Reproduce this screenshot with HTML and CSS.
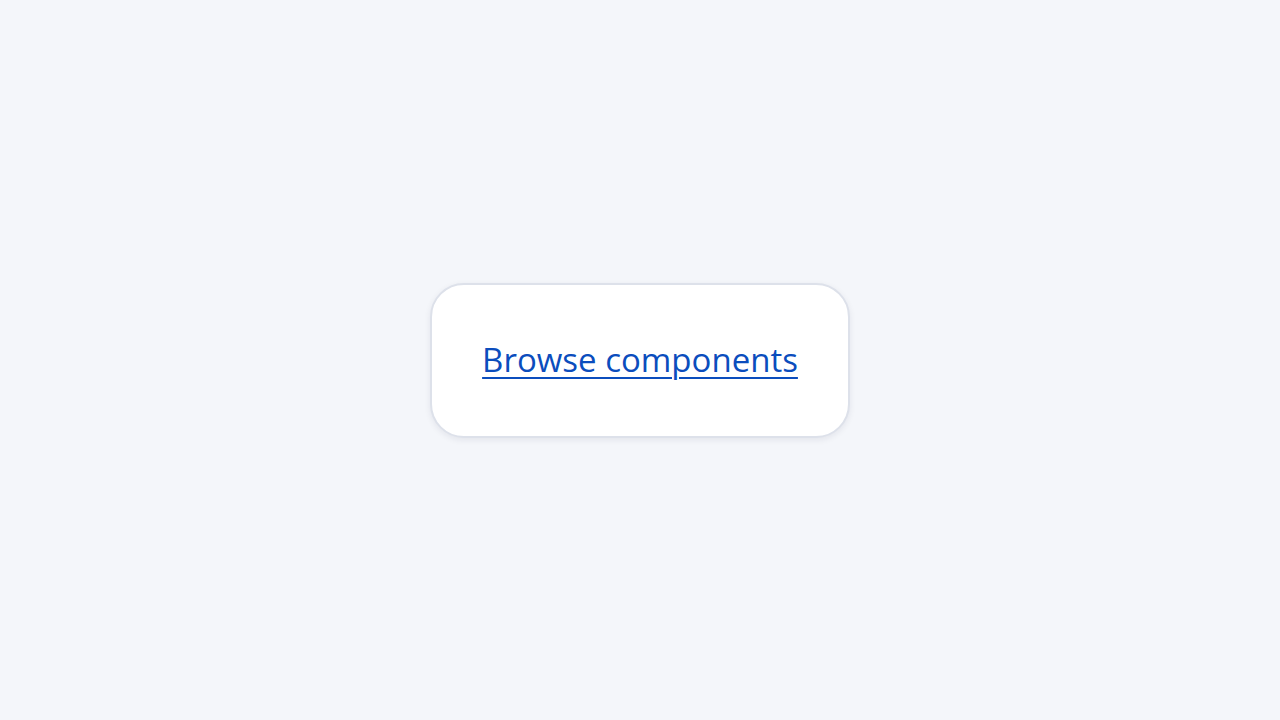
FILE: index.html
```html
<!DOCTYPE html>
<html>
<head>
<meta charset="utf-8">
<link rel="stylesheet" href="styles.css">
</head>
<body>
<main class="page">
  <div class="card">
    <a class="link" href="#">Browse components</a>
  </div>
</main>
</body>
</html>
```
FILE: styles.css
```css
html, body {
  margin: 0;
  padding: 0;
  height: 100%;
}
body {
  background: #f4f6fa;
  font-family: "Open Sans", "Noto Sans", sans-serif;
}
.page {
  height: 720px;
  display: flex;
  align-items: center;
  justify-content: center;
}
.card {
  box-sizing: border-box;
  width: 420px;
  height: 155px;
  background: #ffffff;
  border: 2px solid #dde1ea;
  border-radius: 34px;
  box-shadow: 0 2px 6px rgba(20, 30, 60, 0.08);
  display: flex;
  align-items: center;
  justify-content: center;
}
.link {
  font-size: 33px;
  line-height: 40px;
  color: #0b4dbd;
  text-decoration: underline;
  text-decoration-thickness: 2px;
  text-underline-offset: 5px;
  letter-spacing: 0;
}
```
